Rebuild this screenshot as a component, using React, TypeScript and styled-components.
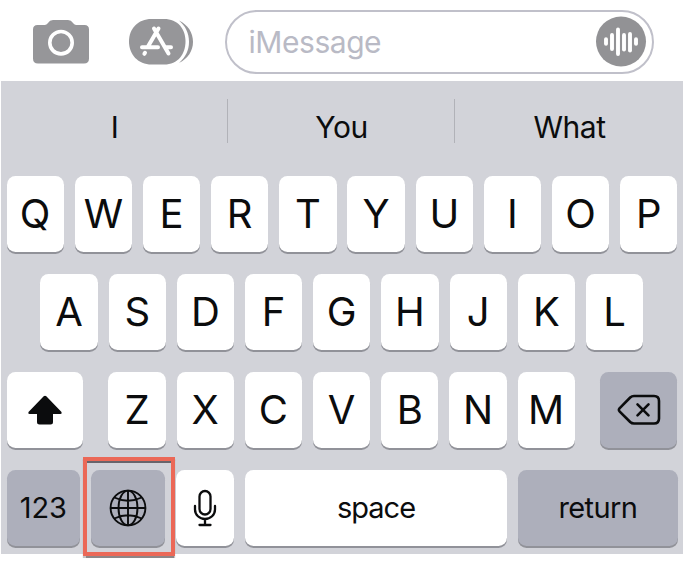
import React from "react";
import styled, { createGlobalStyle, css } from "styled-components";

const GlobalStyle = createGlobalStyle`
  * { box-sizing: border-box; }
  body { margin: 0; background: #fff; font-family: Inter, "Liberation Sans", sans-serif; color: #0b0c0d; }
`;

const Screen = styled.main`
  width: 683px;
  height: 561px;
  overflow: hidden;
  background: #fff;
`;

const MessageBar = styled.header`
  height: 81px;
  display: flex;
  align-items: flex-start;
  padding: 10px 0 0 32px;
`;

const BarIcon = styled.svg<{ $gap: number }>`
  display: block;
  flex: none;
  margin-top: 8px;
  margin-right: ${(p) => p.$gap}px;
`;

const MessageField = styled.div`
  width: 429px;
  height: 63.5px;
  border: 2px solid #c0c0ca;
  border-radius: 32px;
  display: flex;
  align-items: center;
  justify-content: space-between;
  padding: 0 5px 0 21.5px;
`;

const Placeholder = styled.span`
  font-size: 30px;
  line-height: 36px;
  letter-spacing: -0.45px;
  color: #b9bac5;
  padding-top: 1px;
`;

const Keyboard = styled.section`
  margin-left: 1px;
  height: 472.5px;
  background: #d2d3d9;
`;

const Suggestions = styled.div`
  height: 94.5px;
  display: grid;
  grid-template-columns: 226px 227px 229px;
  padding-top: 18px;
`;

const Suggestion = styled.div`
  height: 44px;
  display: flex;
  align-items: center;
  justify-content: center;
  padding: 11px 0 0 1px;
  font-size: 30px;
  line-height: 36px;
  letter-spacing: -0.5px;
  & + & { border-left: 1px solid #b1b2b8; }
`;

const Row = styled.div<{ $start?: number }>`
  display: flex;
  gap: 10.9px;
  padding-left: ${(p) => p.$start ?? 5.5}px;
  height: 98px;
`;

const Key = styled.div<{ $w?: number; $dark?: boolean; $label?: boolean; $before?: number; $track?: number }>`
  flex: none;
  width: ${(p) => p.$w ?? 57.3}px;
  height: 76.3px;
  margin-left: ${(p) => p.$before ?? 0}px;
  border-radius: 8.5px;
  background: ${(p) => (p.$dark ? "#adafbb" : "#fff")};
  box-shadow: 0 2px 0 #919299;
  display: flex;
  align-items: center;
  justify-content: center;
  font-size: 40px;
  font-weight: 370;
  line-height: 48px;
  padding-top: 1px;
  ${(p) =>
    p.$label &&
    css`
      font-size: 29px;
      font-weight: 400;
      padding-top: 0;
      padding-bottom: 0;
      letter-spacing: ${p.$track ?? 0}px;
    `}
`;

const GlobeSlot = styled.div`
  position: relative;
  flex: none;
`;

const Highlight = styled.div`
  position: absolute;
  left: -8.2px;
  top: -12.4px;
  width: 92px;
  height: 98.4px;
  border: 4.5px solid #eb6857;
  box-shadow: 0 1.500px 1px #8d8587, inset 0 2px 0.5px #68646a;
`;

const Camera = () => (
  <BarIcon $gap={39} width="58" height="48" viewBox="0 0 58 48">
    <path fill="#969699" d="M5.5 7H13q2-.2 3.2-2.3Q17.6 2 21 2h15q3.3 0 4.8 2.7Q42 6.8 44 7h8.5Q57 7 57 11.5v29q0 5-5 5H6q-5 0-5-5v-29Q1 7 5.500 7Z" />
    <circle cx="29" cy="24.700" r="11.200" fill="none" stroke="#fff" strokeWidth="3.600" />
  </BarIcon>
);

const AppStore = () => (
  <BarIcon $gap={31} width="65" height="48" viewBox="0 0 65 48">
    <path fill="#969699" d="M22.500 1H35C49 1 56.500 11 56.500 23.500S49 46.500 35 46.500H22.500C9 46.500 0 36.500 0 23.500S9 1 22.500 1Z" />
    <path fill="#969699" d="M50 2.500C59 7 64 14.500 64 23.800S59 40.500 50 45c6.500-5.500 10-12.500 10-21.200S56.500 8 50 2.500Z" />
    <g stroke="#fff" strokeWidth="4" strokeLinecap="round" fill="none">
      <path d="M29.500 10.500 18.700 29M25 10.500 39.500 35.500M13 29.300H29M36.500 29.300H42M16 34.800l-.6 1" />
    </g>
  </BarIcon>
);

const WAVE = [
  [10, 22.3, 28.700], [16, 18, 34], [22, 12.500, 39],
  [28, 18, 34.500], [34, 17, 35.5], [40, 22.300, 28.700],
];

const AudioWave = () => (
  <svg width="51" height="51" viewBox="0 0 51 51">
    <circle cx="25" cy="25.500" r="25" fill="#929295" />
    {WAVE.map(([x, top, bottom]) => (
      <path key={x} d={`M${x} ${top + 1}V${bottom - 1}`} stroke="#fff" strokeWidth="3.900" strokeLinecap="round" />
    ))}
  </svg>
);

const Shift = () => (
  <svg width="36" height="32" viewBox="0 0 36 32">
    <path fill="#0b0c0d" d="M16.700 2.300q1.300-1.200 2.600 0L34.500 18q.8 1.800-1 2H26v8q0 2.500-2.500 2.500h-11Q10 30.500 10 28v-8H2.500q-1.900-.2-1-2Z" />
  </svg>
);

const Backspace = () => (
  <svg width="44" height="32" viewBox="0 0 44 32" fill="none" stroke="#0b0c0d" strokeWidth="2.600" strokeLinecap="round" strokeLinejoin="round">
    <path d="M17 2H37Q42 2 42 7V24.500Q42 29.500 37 29.500H17Q14.800 29.500 13.200 28L2.500 17.300Q1.300 15.800 2.500 14.300L13.200 3.500Q14.800 2 17 2Z" />
    <path d="m20.500 10.300 11 11m0-11-11 11" />
  </svg>
);

const Globe = () => (
  <svg width="38" height="38" viewBox="0 0 38 38" fill="none" stroke="#0b0c0d" strokeWidth="1.900">
    <circle cx="19" cy="19" r="17.400" />
    <ellipse cx="19" cy="19" rx="9.500" ry="17.400" />
    <path d="M19 1.600v34.800M1.600 19h34.800M5.300 8.500Q19 15 32.700 8.500M5.300 29.500Q19 23 32.700 29.500" />
  </svg>
);

const Mic = () => (
  <svg width="24" height="38" viewBox="0 0 24 38" fill="none" stroke="#0b0c0d" strokeWidth="2.300" strokeLinecap="round">
    <rect x="6.500" y="2" width="11" height="23.500" rx="5.500" />
    <path d="M2 17v3.500a10 9.500 0 0 0 20 0V17M12 30v6M6.500 36h11" />
  </svg>
);

const Letters = ({ value }: { value: string }) => (
  <>{value.split("").map((letter) => <Key key={letter}>{letter}</Key>)}</>
);

export default function App() {
  return (
    <Screen>
      <GlobalStyle />
      <MessageBar>
        <Camera />
        <AppStore />
        <MessageField>
          <Placeholder>iMessage</Placeholder>
          <AudioWave />
        </MessageField>
      </MessageBar>
      <Keyboard>
        <Suggestions>
          <Suggestion>I</Suggestion>
          <Suggestion>You</Suggestion>
          <Suggestion>What</Suggestion>
        </Suggestions>
        <Row><Letters value="QWERTYUIOP" /></Row>
        <Row $start={39.4}><Letters value="ASDFGHJKL" /></Row>
        <Row>
          <Key $w={76.4}><Shift /></Key>
          <Key $before={14.600}>Z</Key>
          <Letters value="XCVBNM" />
          <Key $w={76.500} $dark $before={14.800}><Backspace /></Key>
        </Row>
        <Row>
          <Key $w={73.700} $dark $label>123</Key>
          <GlobeSlot>
            <Key $w={74.400} $dark><Globe /></Key>
            <Highlight />
          </GlobeSlot>
          <Key><Mic /></Key>
          <Key $w={262.900} $label $track={-1}>space</Key>
          <Key $w={159.200} $dark $label $track={-0.6}>return</Key>
        </Row>
      </Keyboard>
    </Screen>
  );
}
